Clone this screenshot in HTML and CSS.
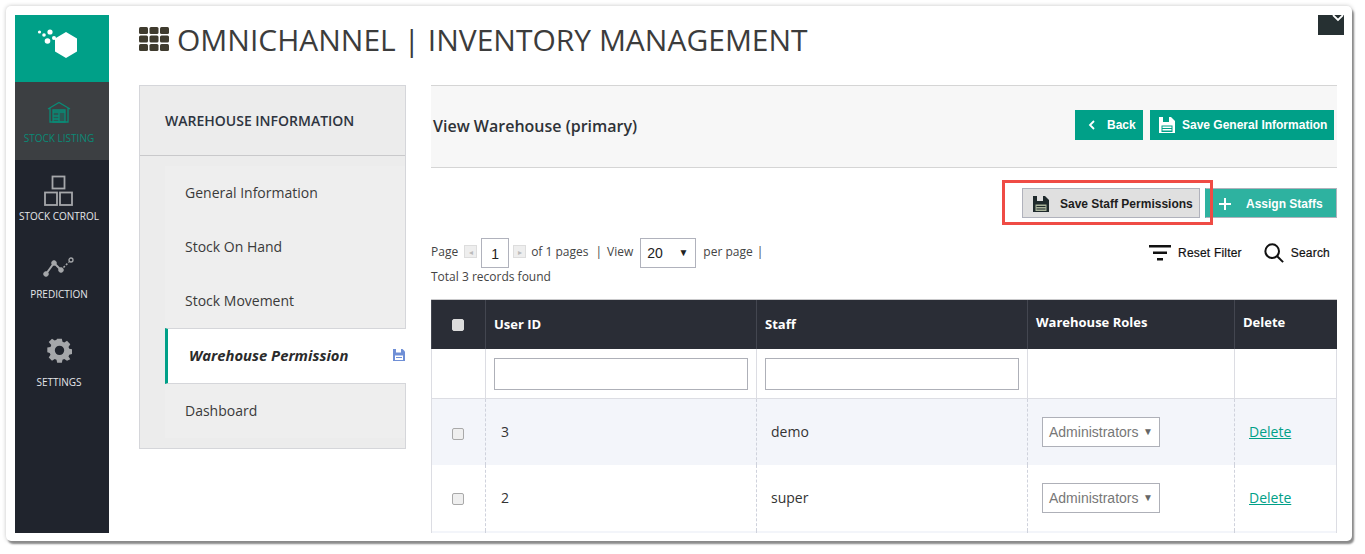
FILE: index.html
```html
<!DOCTYPE html>
<html lang="en">
<head>
<meta charset="utf-8">
<title>Omnichannel | Inventory Management</title>
<link rel="stylesheet" href="styles.css">
</head>
<body>
<div class="frame">
  <nav class="rail">
    <div class="logo">
      <svg width="46" height="34" viewBox="0 0 46 34"><g fill="#fff"><polygon points="29,3 40,9.500 40,22.500 29,29 18,22.500 18,9.500"/><circle cx="2.500" cy="3" r="1.600"/><circle cx="7" cy="6" r="1.800"/><circle cx="13" cy="3" r="2.600"/><circle cx="10.500" cy="12" r="2.800"/><circle cx="17" cy="9" r="2"/></g></svg>
    </div>
    <a class="rail-item active">
      <svg class="rail-icon" width="24" height="24" viewBox="0 0 24 24" fill="none" stroke="#0a8a76" stroke-width="1.300"><path d="M1 9 L12 2.500 L23 9 M3 8 V22 H21 V8"/><path d="M6 10 H18 V22 H6Z" fill="#0a8a76" fill-opacity=".35"/><path d="M6 12 H18 M6 16 H12 M6 19 H12 M12 13 V21" /></svg>
      <span>STOCK LISTING</span>
    </a>
    <a class="rail-item control">
      <svg class="rail-icon" width="32" height="32" viewBox="0 0 32 32" fill="none" stroke="#a5a7aa" stroke-width="1.800"><rect x="9.500" y="1.500" width="12" height="12"/><rect x="2" y="17.500" width="12" height="12.500"/><rect x="17" y="17.500" width="12" height="12.500"/></svg>
      <span>STOCK CONTROL</span>
    </a>
    <a class="rail-item predict">
      <svg class="rail-icon" width="32" height="22" viewBox="0 0 32 22" fill="none" stroke="#a5a7aa"><path d="M3 18 L11 7 L18 14" stroke-width="2"/><path d="M18 14 L26 6" stroke-width="1.500" stroke-dasharray="2 1.500"/><circle cx="3" cy="18" r="2.300" fill="#a5a7aa"/><circle cx="11" cy="7" r="2.300" fill="#a5a7aa"/><circle cx="18" cy="14" r="2.300" fill="#a5a7aa"/><circle cx="28" cy="4" r="2" stroke-width="1.300"/></svg>
      <span>PREDICTION</span>
    </a>
    <a class="rail-item settings">
      <svg class="rail-icon" width="25" height="25" viewBox="0 0 24 24"><path fill="#a5a7aa" fill-rule="evenodd" d="M9.500 0h5l.7 3.400 1.900.8L20 2.300l3.500 3.600-1.900 2.900.8 1.900 3.400.7v5l-3.400.7-.8 1.900 1.900 2.900L20 23.500l-2.900-1.900-1.900.8-.7 3.400h-5l-.7-3.400-1.900-.8-2.900 1.900L.5 20l1.900-2.900-.8-1.900L-1 14.500v-5l3.400-.7.8-1.900L.5 3.500 4 0l2.900 1.900 1.900-.8zM12 7.500a5 5 0 1 0 0 10 5 5 0 0 0 0-10z" transform="translate(1.200 .6) scale(.9)"/></svg>
      <span>SETTINGS</span>
    </a>
  </nav>

  <main class="content">
    <h1 class="page-title">
      <svg class="grid-icon" width="30" height="24" viewBox="0 0 30 24" fill="#3f3b2e"><rect x="0" y="0" width="9" height="7" rx="1.500"/><rect x="10.500" y="0" width="9" height="7" rx="1.500"/><rect x="21" y="0" width="9" height="7" rx="1.500"/><rect x="0" y="8.500" width="9" height="7" rx="1.500"/><rect x="10.500" y="8.500" width="9" height="7" rx="1.500"/><rect x="21" y="8.500" width="9" height="7" rx="1.500"/><rect x="0" y="17" width="9" height="7" rx="1.500"/><rect x="10.500" y="17" width="9" height="7" rx="1.500"/><rect x="21" y="17" width="9" height="7" rx="1.500"/></svg>
      OMNICHANNEL | INVENTORY MANAGEMENT
    </h1>
    <div class="columns">
      <aside class="side">
        <h2 class="side-head">WAREHOUSE INFORMATION</h2>
        <ul class="side-menu">
          <li>General Information</li>
          <li>Stock On Hand</li>
          <li>Stock Movement</li>
          <li class="current">Warehouse Permission
            <svg class="side-save" width="12" height="12" viewBox="0 0 12 12"><path fill="#6f8fd6" d="M0 0h9.500L12 2.500V12H0z"/><path fill="#fff" d="M3 0h5v3.500H3zM2 6.500h8V11H2z"/><path fill="#6f8fd6" d="M3 8h6v1H3z"/></svg>
          </li>
          <li>Dashboard</li>
        </ul>
      </aside>

      <section class="panel">
        <header class="panel-head">
          <h2>View Warehouse (primary)</h2>
          <div class="panel-actions">
            <button class="btn btn-back"><svg width="8" height="10" viewBox="0 0 8 10" fill="none" stroke="#fff" stroke-width="1.800"><path d="M6 1 L2 5 L6 9"/></svg>Back</button>
            <button class="btn btn-save"><svg width="16" height="16" viewBox="0 0 16 16"><path fill="#fff" d="M0 0h12l4 4v12H0z"/><path fill="#00a088" d="M4 0h6v5H4zM2.500 8.500h11V15h-11z"/><path fill="#fff" d="M3.500 9.500h9V11h-9zM3.500 12h9v1.500h-9z"/></svg>Save General Information</button>
          </div>
        </header>
        <div class="staff-actions">
          <button class="btn btn-perm"><svg width="16" height="16" viewBox="0 0 16 16"><path fill="#1f2a2c" d="M0 0h12l4 4v12H0z"/><path fill="#e0e0e0" d="M4 0h6v5H4z"/><path fill="#a9b39a" d="M2.500 8.500h11V15h-11z"/><path fill="#1f2a2c" d="M3.500 10h9v1h-9zM3.500 12.500h9v1h-9z"/></svg>Save Staff Permissions</button>
          <button class="btn btn-assign"><svg width="12" height="12" viewBox="0 0 12 12" fill="none" stroke="#fff" stroke-width="2"><path d="M6 0V12M0 6H12"/></svg>Assign Staffs</button>
        </div>
        <div class="pager">
          <div class="pager-left">
            <div class="pager-line">
              <span>Page</span>
              <span class="pg-arrow">◂</span>
              <span class="pg-num">1</span>
              <span class="pg-arrow">▸</span>
              <span>of 1 pages</span><span class="sep">|</span><span>View</span>
              <span class="pg-view">20<i>▼</i></span>
              <span>per page</span><span class="sep2">|</span>
            </div>
            <div class="pager-total">Total 3 records found</div>
          </div>
          <div class="pager-tools">
            <span class="tool"><svg width="22" height="16" viewBox="0 0 22 16" fill="#111"><path d="M0 0h22v2.500H0zM4 6.500h14V9H4zM8 13h6v2.500H8z"/></svg>Reset Filter</span>
            <span class="tool"><svg width="20" height="20" viewBox="0 0 22 22" fill="none" stroke="#111" stroke-width="2.200"><circle cx="9" cy="9" r="7.500"/><path d="M14.500 14.500 L21 21"/></svg>Search</span>
          </div>
        </div>
        <table class="grid">
          <colgroup><col class="c1"><col class="c2"><col class="c3"><col class="c4"><col class="c5"></colgroup>
          <thead>
            <tr><th class="chk"><input type="checkbox"></th><th class="lower">User ID</th><th class="lower">Staff</th><th>Warehouse Roles</th><th>Delete</th></tr>
          </thead>
          <tbody>
            <tr class="filter"><td></td><td><input type="text"></td><td><input type="text"></td><td></td><td></td></tr>
            <tr class="row odd"><td class="chk"><input type="checkbox"></td><td class="id uid">3</td><td class="id">demo</td><td class="role-cell"><span class="role">Administrators<i>▼</i></span></td><td><a class="del">Delete</a></td></tr>
            <tr class="row"><td class="chk"><input type="checkbox"></td><td class="id uid">2</td><td class="id">super</td><td class="role-cell"><span class="role">Administrators<i>▼</i></span></td><td><a class="del">Delete</a></td></tr>
            <tr class="row odd"><td></td><td></td><td></td><td></td><td></td></tr>
          </tbody>
        </table>
      </section>
    </div>
  </main>
  <div class="highlight"></div>
  <div class="collapse"><svg width="12" height="7" viewBox="0 0 12 7" fill="none" stroke="#fff" stroke-width="1.800"><path d="M1 0 L6 5 L11 0"/></svg></div>
</div>
</body>
</html>
```
FILE: styles.css
```css
* { box-sizing: border-box; }
html, body { margin: 0; padding: 0; background: #fff; }
body { width: 1365px; height: 554px; overflow: hidden; font-family: "Open Sans", sans-serif; color: #333; }
.frame {
  position: relative;
  margin: 6px 0 0 6px;
  width: 1346px;
  height: 535px;
  padding: 9px;
  display: flex;
  background: #fff;
  border-radius: 5px;
  box-shadow: 2px 3px 2px #8a8a8a, 0 0 4px #c4c4c4;
}
.rail { width: 94px; flex: none; height: 518px; background: #20242d; display: flex; flex-direction: column; }
.logo { height: 67px; background: #00a088; display: flex; align-items: center; justify-content: center; padding-right: 5px; padding-bottom: 6px; }
.rail-item { display: flex; flex-direction: column; align-items: center; padding-right: 6px; color: #e4e6ea; font-size: 10px; line-height: 14px; }
.rail-item.active { height: 78px; background: #3c3f42; color: #0a8a76; padding-top: 18px; }
.rail-item.active .rail-icon { margin-bottom: 7px; }
.rail-item.control { padding-top: 15px; height: 78px; }
.rail-item.control .rail-icon { margin-bottom: 2px; }
.rail-item.predict { padding-top: 18px; height: 88px; }
.rail-item.predict .rail-icon { margin-bottom: 9px; }
.rail-item.settings { padding-top: 12px; }
.rail-item.settings .rail-icon { margin-bottom: 12px; }

.content { flex: 1; height: 518px; padding-left: 30px; min-width: 0; overflow: hidden; }
.page-title { margin: 0; height: 70px; display: flex; align-items: center; gap: 8px; font-size: 30px; font-weight: 400; color: #3c3c3c; padding-bottom: 24px; padding-top: 2px; white-space: nowrap; }
.grid-icon { flex: none; margin-top: 0; }
.columns { display: flex; gap: 25px; align-items: flex-start; }

.side { width: 267px; height: 364px; flex: none; background: #ececec; border: 1px solid #d5d6da; }
.side-head { margin: 0; height: 70px; line-height: 70px; padding-left: 25px; font-size: 14px; font-weight: 600; color: #2e3440; border-bottom: 1px solid #c9c9cb; }
.side-menu { list-style: none; margin: 10px 0 0 25px; padding: 0; }
.side-menu li { height: 54px; line-height: 54px; padding-left: 20px; font-size: 14px; background: #eee; color: #3a3a3a; }
.side-menu li.current { height: 56px; margin: 0 -1px -1px 0; line-height: 54px; background: #fff; border-left: 3px solid #00a088; border-bottom: 1px solid #d5d6da; border-top: 1px solid #d5d6da; padding: 0 0 2px 21px; font-size: 14.800px; font-style: italic; font-weight: 700; color: #2b2b2b; display: flex; align-items: center; position: relative; }
.side-menu li:last-child { height: 55px; padding-top: 1px; }
.side-save { position: absolute; right: 1px; top: 20px; }

.panel { flex: none; width: 906px; }
.panel-head { height: 83px; background: #f7f7f7; border-top: 1px solid #d5d5d5; border-bottom: 1px solid #d5d5d5; display: flex; align-items: center; justify-content: space-between; padding: 0 3px 2px 2px; }
.panel-head h2 { margin: 0; font-size: 16px; font-weight: 600; color: #2f3338; }
.panel-actions { display: flex; gap: 7px; margin-bottom: 2px; }
.btn { border: 0; height: 30px; display: flex; align-items: center; font-family: "Liberation Sans", sans-serif; font-size: 12px; font-weight: 700; color: #fff; padding: 0; cursor: pointer; }
.btn-back { width: 68px; background: #00a088; padding-left: 13px; gap: 11px; }
.btn-save { width: 184px; background: #00a088; padding-left: 9px; gap: 7px; }
.staff-actions { display: flex; justify-content: flex-end; gap: 5px; margin-top: 20px; }
.btn-perm { width: 178px; background: #e0e0e0; border: 1px solid #b0b2bc; color: #1d1d1d; padding: 2px 0 0 10px; gap: 11px; }
.btn-assign { width: 132px; background: #2eb2a0; border: 1px solid #b0b2bc; border-left-color: #2eb2a0; padding: 2px 0 0 13px; gap: 15px; }

.pager { display: flex; justify-content: space-between; margin-top: 20px; height: 61px; }
.pager-left { font-size: 12px; color: #444; }
.pager-line { display: flex; align-items: center; height: 30px; }
.pager-line > span { margin-bottom: 3px; }
.pager-line > .pg-arrow { width: 13px; height: 13px; margin: 0 4px 3px 6px; border: 1px solid #ddd; background: #eee; color: #bbb; font-size: 8px; line-height: 11px; text-align: center; }
.pager-line > .pg-num { width: 28px; height: 30px; line-height: 30px; margin: 0; border: 1px solid #b0b2bc; text-align: center; font-family: "Liberation Sans", sans-serif; font-size: 14px; color: #222; }
.pager-line > .pg-num + .pg-arrow { margin-left: 4px; margin-right: 5px; }
.pager-line > .sep { margin: 0 5px 3px 7px; }
.pager-line > .pg-view { width: 56px; height: 30px; margin: 0 7px; line-height: 28px; border: 1px solid #b0b2bc; padding-left: 6px; font-family: "Liberation Sans", sans-serif; font-size: 14px; color: #222; position: relative; display: block; }
.pg-view i { position: absolute; right: 7px; top: 0; font-style: normal; font-size: 10px; }
.pager-line > .sep2 { margin-left: 4px; }
.pager-total { margin-top: 1px; line-height: 16px; }
.pager-tools { display: flex; gap: 22px; padding: 4px 7px 0 0; height: 26px; align-items: center; font-family: "Liberation Sans", sans-serif; font-size: 12px; font-weight: 400; color: #111; letter-spacing: .2px; }
.tool { display: flex; align-items: center; gap: 7px; -webkit-text-stroke: .2px #111; }

.grid { width: 905px; table-layout: fixed; border-collapse: collapse; font-size: 14px; }
.c1 { width: 54px; } .c2 { width: 271px; } .c3 { width: 271px; } .c4 { width: 207px; } .c5 { width: 102px; }
.grid th { height: 49px; background: #2a2d36; color: #fff; text-align: left; font-size: 13px; font-weight: 700; padding: 0 0 4px 8px; border-left: 1px solid #434650; border-top: 1px solid #c9c9cb; }
.grid th.lower { padding: 0 0 1px 8px; }
.grid th.chk { text-align: center; padding: 0 2px 2px 0; }
.grid td.chk { text-align: center; padding: 0 2px 0 0; }
.grid input[type=checkbox] { appearance: none; display: inline-block; vertical-align: middle; width: 12px; height: 12px; margin: 0; background: #efefef; border: 1px solid #a9a9a9; border-radius: 2px; }
.grid th input[type=checkbox] { background: #dcdcdc; border-color: #dcdcdc; }
.filter td { height: 50px; padding: 2px 0 0 8px; border: 1px solid #dcdde3; border-width: 0 1px 1px; vertical-align: middle; }
.filter input { display: block; width: 254px; height: 32px; border: 1px solid #aeb0b8; background: #fff; }
.row td { height: 66px; padding: 0 0 0 8px; border-left: 1px dashed #cfd2dc; }
.row td:first-child { border-left: 1px solid #dcdde3; }
.row td:last-child { border-right: 1px solid #dcdde3; padding-left: 14px; }
.row.odd td { background: #f3f5fa; }
.row td.id { padding-left: 14px; color: #333; }
.row td.uid { padding-left: 15px; }
.row td.role-cell { padding-left: 14px; }
.role { display: block; position: relative; width: 118px; height: 30px; line-height: 28px; padding-left: 6px; border: 1px solid #aeb0b8; background: #fff; color: #777; font-family: "Liberation Sans", sans-serif; font-size: 14px; }
.role i { position: absolute; right: 6px; top: 0; font-style: normal; font-size: 10px; color: #666; }
.del { color: #00a088; text-decoration: underline; }

.highlight { position: absolute; left: 996px; top: 174px; width: 211px; height: 45px; border: 3px solid #ef4b45; pointer-events: none; }
.collapse { position: absolute; left: 1312px; top: 9px; width: 26px; height: 20px; padding-left: 14px; background: #263032; display: flex; justify-content: flex-start; align-items: flex-start; }
```
